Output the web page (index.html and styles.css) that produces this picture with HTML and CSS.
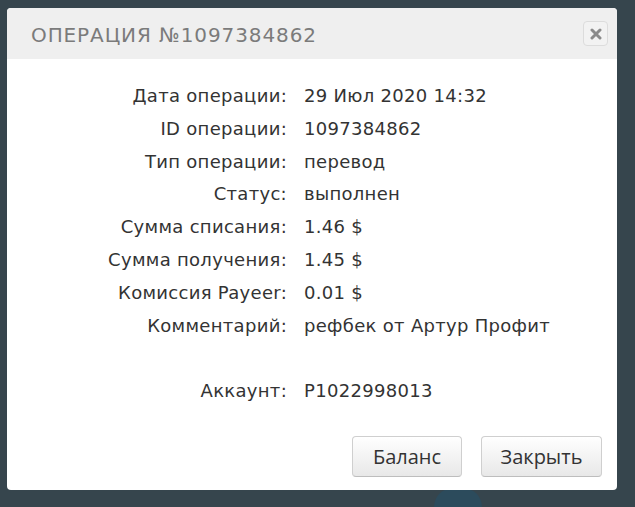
FILE: index.html
```html
<!DOCTYPE html>
<html lang="ru">
<head>
    <meta charset="UTF-8">
    <title>Операция №1097384862</title>
    <link rel="stylesheet" href="styles.css">
</head>
<body>
    <div class="backdrop-logo"></div>

    <div class="modal">
        <div class="modal-header">
            <h3>Операция №1097384862</h3>
            <button class="close-btn" title="Закрыть">
                <svg width="12" height="12" viewBox="0 0 12 12">
                    <path d="M2 2 L10 10 M10 2 L2 10" stroke="#8a8a8a" stroke-width="3" stroke-linecap="round"/>
                </svg>
            </button>
        </div>

        <div class="modal-body">
            <div class="info-grid">
                <div class="label">Дата операции:</div>
                <div class="value">29 Июл 2020 14:32</div>

                <div class="label">ID операции:</div>
                <div class="value">1097384862</div>

                <div class="label">Тип операции:</div>
                <div class="value">перевод</div>

                <div class="label">Статус:</div>
                <div class="value">выполнен</div>

                <div class="label">Сумма списания:</div>
                <div class="value">1.46 $</div>

                <div class="label">Сумма получения:</div>
                <div class="value">1.45 $</div>

                <div class="label">Комиссия Payeer:</div>
                <div class="value">0.01 $</div>

                <div class="label">Комментарий:</div>
                <div class="value">рефбек от Артур Профит</div>

                <div class="label">&nbsp;</div>
                <div class="value">&nbsp;</div>

                <div class="label">Аккаунт:</div>
                <div class="value">P1022998013</div>
            </div>
        </div>

        <div class="modal-footer">
            <button class="btn">Баланс</button>
            <button class="btn">Закрыть</button>
        </div>
    </div>
</body>
</html>
```

FILE: styles.css
```css
:root {
    --page-bg: #36454d;
    --header-bg: #efefef;
    --title-color: #7b7b7b;
    --text-color: #333333;
    --border-color: #cfcfcf;
}

html {
    overflow: hidden;
}

body {
    margin: 0;
    height: 507px;
    overflow: hidden;
    background-color: var(--page-bg);
    font-family: "DejaVu Sans", sans-serif;
    position: relative;
}

.backdrop-logo {
    position: absolute;
    left: 434px;
    top: 488px;
    width: 48px;
    height: 19px;
    border-radius: 24px 24px 0 0;
    background-color: #2c4b5c;
}

.modal {
    position: relative;
    margin: 8px 0 0 7px;
    width: 610px;
    height: 482px;
    background-color: #ffffff;
    border-radius: 4px;
    display: flex;
    flex-direction: column;
    overflow: hidden;
}

.modal-header {
    height: 51px;
    background-color: var(--header-bg);
    display: flex;
    align-items: center;
    justify-content: space-between;
    padding: 2px 9px 0 24px;
    box-sizing: border-box;
}

.modal-header h3 {
    margin: 0;
    font-weight: normal;
    font-size: 20px;
    letter-spacing: 0.9px;
    text-transform: uppercase;
    color: var(--title-color);
}

.close-btn {
    width: 25px;
    height: 25px;
    margin-top: -2px;
    padding: 0;
    border: 1px solid #dcdcdc;
    border-radius: 4px;
    background-color: #f2f2f2;
    display: flex;
    align-items: center;
    justify-content: center;
    cursor: pointer;
}

.modal-body {
    flex-grow: 1;
    padding-top: 21px;
}

.info-grid {
    display: grid;
    grid-template-columns: 280px 1fr;
    column-gap: 17px;
    font-size: 18px;
    letter-spacing: 0.3px;
    line-height: 32.8px;
    color: var(--text-color);
}

.label {
    text-align: right;
}

.modal-footer {
    display: flex;
    justify-content: flex-end;
    gap: 19px;
    padding: 0 15px 13px 0;
}

.btn {
    height: 41px;
    padding: 0 10px;
    font-family: "Open Sans", sans-serif;
    font-size: 20px;
    color: var(--text-color);
    background: linear-gradient(#ffffff, #e8e8e8);
    border: 1px solid var(--border-color);
    border-bottom-color: #bdbdbd;
    border-radius: 4px;
    cursor: pointer;
}

.btn:first-child {
    width: 110px;
}

.btn:last-child {
    width: 121px;
}
```
